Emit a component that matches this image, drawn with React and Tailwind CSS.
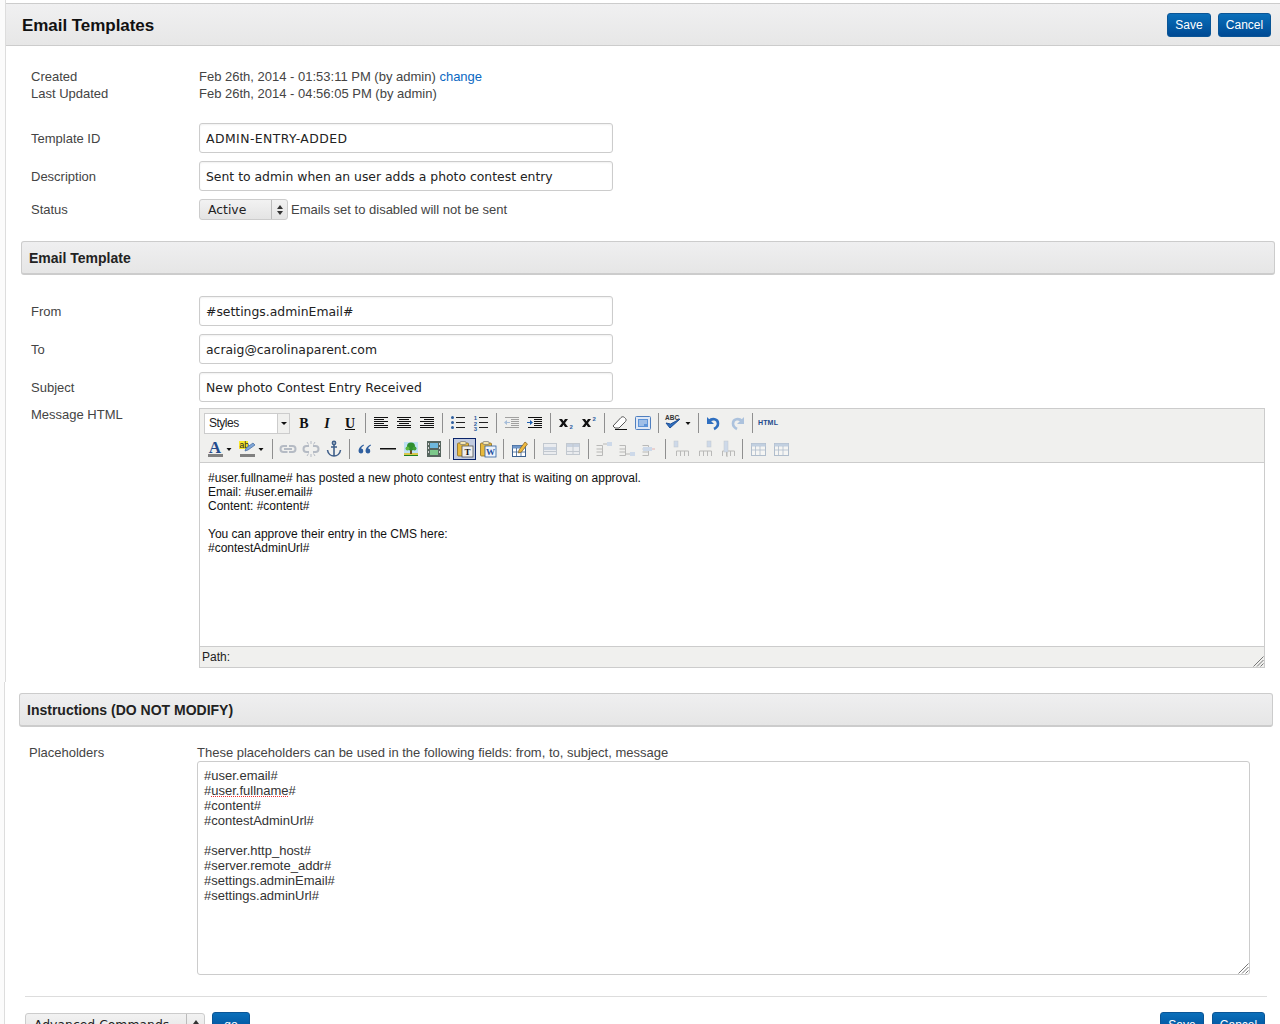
import React from "react";

const Ico = ({ children, dim }) => (
  <span className="w-[23px] h-5 flex items-center justify-center shrink-0">
    <svg width="20" height="20" viewBox="0 0 20 20" className={dim ? "opacity-35" : ""}>
      {children}
    </svg>
  </span>
);

const Sep = () => (
  <span className="w-2 h-5 flex justify-center shrink-0">
    <span className="w-px h-full bg-[#8f8f8f]" />
  </span>
);

const Arrow = () => (
  <svg width="12" height="20" viewBox="0 0 12 20" className="shrink-0">
    <path d="M3.500 9h5l-2.500 3z" fill="#111" />
  </svg>
);

// 6 horizontal lines, used by the align buttons
const Lines = ({ rows }) =>
  rows.map(([x, w], i) => <rect key={i} x={x} y={4 + i * 2} width={w} height="1" fill="#111" />);

const Letter = ({ c, italic, under }) => (
  <Ico>
    <text
      x="10"
      y="14.500"
      textAnchor="middle"
      fontFamily="Liberation Serif"
      fontWeight="700"
      fontStyle={italic ? "italic" : "normal"}
      fontSize="14"
      fill="#111"
    >
      {c}
    </text>
    {under && <rect x="5" y="16" width="10" height="1" fill="#111" />}
  </Ico>
);

const ListLines = () => (
  <g fill="#222">
    <rect x="8" y="4" width="9" height="1" />
    <rect x="8" y="9" width="9" height="1" />
    <rect x="8" y="14" width="9" height="1" />
  </g>
);

const Bullets = () => (
  <Ico>
    <ListLines />
    <g fill="#2f5f9f">
      <circle cx="4.500" cy="4.500" r="1.500" />
      <circle cx="4.500" cy="9.500" r="1.500" />
      <circle cx="4.500" cy="14.500" r="1.500" />
    </g>
  </Ico>
);

const Numbers = () => (
  <Ico>
    <ListLines />
    <g fill="#2f5f9f" fontSize="6" fontWeight="700" fontFamily="Liberation Sans" textAnchor="middle">
      <text x="4.500" y="7">1</text>
      <text x="4.500" y="12.500">2</text>
      <text x="4.500" y="18">3</text>
    </g>
  </Ico>
);

const IndentIcon = ({ dim }) => (
  <Ico dim={dim}>
    <g fill="#111">
      <rect x="3" y="4" width="14" height="1" />
      <rect x="9" y="6" width="8" height="1" />
      <rect x="9" y="8" width="8" height="1" />
      <rect x="9" y="10" width="8" height="1" />
      <rect x="9" y="12" width="8" height="1" />
      <rect x="3" y="14" width="14" height="1" />
    </g>
    <path d={dim ? "M2 9.500 5 7v2h3v1H5v2z" : "M8 9.500 5 7v2H2v1h3v2z"} fill="#1f5fb0" />
  </Ico>
);

const ScriptIcon = ({ sup }) => (
  <Ico>
    <path d="M3 6h3l1.500 2.300L9 6h3l-3 4 3 4H9l-1.500-2.300L6 14H3l3-4z" fill="#111" />
    <text x="13.500" y={sup ? 8 : 16} fontSize="6" fontWeight="700" fontFamily="Liberation Sans" fill="#2f5f9f">
      2
    </text>
  </Ico>
);

const Eraser = () => (
  <Ico>
    <path d="M3 13 11 4.500c1-1 2.500-1 3.500 0l1 1c.8.8.8 2 0 3L9 15H5z" fill="#fff" stroke="#555" />
    <rect x="5" y="16" width="12" height="1" fill="#111" />
  </Ico>
);

const Cleanup = () => (
  <Ico>
    <rect x="2.500" y="3.500" width="15" height="13" rx="1" fill="#dfe8f6" stroke="#4f7fbf" />
    <rect x="5" y="6" width="10" height="8" fill="#5c93d8" />
    <path d="M6 8h8M6 10h8M6 12h5" stroke="#dfe8f6" />
  </Ico>
);

const Spell = () => (
  <Ico>
    <text x="2" y="7" fontSize="6.500" fontWeight="700" fontFamily="Liberation Sans" fill="#333">
      ABC
    </text>
    <path d="m3 10 4 5 10-9-9.500 5z" fill="#2f6fc0" stroke="#1d4f96" strokeWidth="1" strokeLinejoin="round" />
  </Ico>
);

const Undo = ({ redo, dim }) => (
  <Ico dim={dim}>
    <g transform={redo ? "matrix(-1 0 0 1 20 0)" : undefined}>
      <path d="M5 8c3-3 9-2.500 9 2.500 0 2.500-2 4.500-4 5.500" fill="none" stroke="#2f6fc0" strokeWidth="2.600" />
      <path d="M3 4v7h7z" fill="#2f6fc0" />
    </g>
  </Ico>
);

const FontColor = () => (
  <Ico>
    <text x="10" y="13.500" textAnchor="middle" fontFamily="Liberation Serif" fontWeight="700" fontSize="17" fill="#234a8c">
      A
    </text>
    <rect x="3" y="15" width="15" height="3" fill="#808080" />
  </Ico>
);

const Highlight = () => (
  <Ico>
    <rect x="2" y="2" width="9" height="8" fill="#f7e92a" />
    <text x="2.500" y="9" fontSize="8.500" fontFamily="Liberation Sans" fill="#222">
      ab
    </text>
    <path d="m8 12 1-3 7-5 2 2-7 5z" fill="#7ea6d8" stroke="#44689c" strokeWidth=".7" />
    <rect x="3" y="15" width="15" height="3" fill="#808080" />
  </Ico>
);

const LinkIcon = ({ broken }) => (
  <Ico dim>
    <g fill="none" stroke="#4a5a78" strokeWidth="2">
      {broken ? (
        <>
          <path d="M8 7H5.500a3 3 0 0 0 0 6H8M12 7h2.500a3 3 0 0 1 0 6H12" />
          <path d="M10 2v3M6 3l1.500 2.500M14 3l-1.500 2.500M10 15v3M6 17l1.500-2.500M14 17l-1.500-2.500" strokeWidth="1" />
        </>
      ) : (
        <path d="M9 7H5.500a3 3 0 0 0 0 6h4M11 7h3.500a3 3 0 0 1 0 6H11M6 10h8" />
      )}
    </g>
  </Ico>
);

const Anchor = () => (
  <Ico>
    <g fill="none" stroke="#3f5f8a" strokeWidth="1.600">
      <circle cx="10" cy="4" r="1.600" />
      <path d="M10 5.500V17M7 8h6M3.500 11c.5 4 3.500 6 6.500 6s6-2 6.500-6" />
    </g>
  </Ico>
);

const Quote = () => (
  <Ico>
    <g fill="#2f5f9f">
      <path d="M8.500 5.500C5.500 7 3.500 9 3.500 12a2.400 2.400 0 1 0 2.700-2.400C6.300 8.500 7.300 7.300 9 6.500z" />
      <path d="M15.500 5.500C12.500 7 10.500 9 10.500 12a2.400 2.400 0 1 0 2.700-2.400c.1-1.100 1.100-2.300 2.800-3.100z" />
    </g>
  </Ico>
);

const Hr = () => (
  <Ico>
    <rect x="2" y="9" width="16" height="1.500" fill="#111" />
  </Ico>
);

const ImageIcon = () => (
  <Ico>
    <rect x="3" y="3" width="14" height="14" fill="#bfe0f5" />
    <rect x="3" y="14" width="14" height="3" fill="#d8c84a" />
    <rect x="9" y="10" width="2" height="5" fill="#6b4a1f" />
    <circle cx="10" cy="7.500" r="4" fill="#2f8f2f" />
    <circle cx="6.500" cy="9.500" r="2" fill="#5cb83f" />
    <circle cx="13.500" cy="9.500" r="2" fill="#3f9f3a" />
    <rect x="3" y="16" width="14" height="1" fill="#1f7f1f" />
  </Ico>
);

const Film = () => (
  <Ico>
    <rect x="3" y="2" width="14" height="16" fill="#56655e" />
    <rect x="6" y="4" width="8" height="5" fill="#6fb8dc" />
    <rect x="6" y="11" width="8" height="5" fill="#7cc88a" />
    <g fill="#d5d5d5">
      <rect x="4" y="4" width="1" height="2" />
      <rect x="4" y="8" width="1" height="2" />
      <rect x="4" y="12" width="1" height="2" />
      <rect x="15" y="4" width="1" height="2" />
      <rect x="15" y="8" width="1" height="2" />
      <rect x="15" y="12" width="1" height="2" />
    </g>
  </Ico>
);

const Clip = () => (
  <>
    <rect x="2.500" y="4" width="11" height="13" rx="1" fill="#e8b93c" stroke="#8a6a1f" strokeWidth=".8" />
    <rect x="5" y="2.500" width="6" height="3" rx="1" fill="#f5e6b0" stroke="#777" strokeWidth=".7" />
  </>
);

const PasteText = () => (
  <span className="w-[23px] h-[22px] flex items-center justify-center shrink-0 bg-[#c2cbe0] border border-[#0a246a]">
    <svg width="20" height="20" viewBox="0 0 20 20">
      <Clip />
      <rect x="7" y="7" width="11" height="11" fill="#eee" stroke="#555" strokeWidth=".8" />
      <text x="12.500" y="16" textAnchor="middle" fontSize="9" fontWeight="700" fontFamily="Liberation Serif" fill="#111">
        T
      </text>
    </svg>
  </span>
);

const PasteWord = () => (
  <Ico>
    <Clip />
    <rect x="7" y="7" width="11" height="11" fill="#eef3fb" stroke="#2f5f9f" strokeWidth=".8" />
    <text x="12.500" y="16" textAnchor="middle" fontSize="9" fontWeight="700" fontFamily="Liberation Serif" fill="#1f4f9f">
      W
    </text>
  </Ico>
);

const Grid = ({ x = 3, y = 6, w = 13, h = 11 }) => (
  <>
    <rect x={x + 0.5} y={y + 0.5} width={w} height={h} fill="#fff" stroke="#3a5f8f" />
    <rect x={x + 0.5} y={y + 0.5} width={w} height="3" fill="#6f96c8" />
    <path d={`M${x + 4.500} ${y + 3}v${h - 3}M${x + 9} ${y + 3}v${h - 3}M${x} ${y + 7}h${w}`} stroke="#3a5f8f" strokeWidth=".8" />
  </>
);

const TableEdit = () => (
  <Ico>
    <Grid />
    <path d="m10 11 6-8 2.500 2-6 8-3 1z" fill="#efb93f" stroke="#7a5a1f" strokeWidth=".7" />
  </Ico>
);

const RowIcon = ({ flip }) => (
  <Ico dim>
    <rect x="3.500" y="4.500" width="13" height="11" fill="#dfe6f2" stroke="#6f7f96" />
    <rect x="4" y={flip ? 5 : 8} width="12" height="3" fill="#7f9cc8" />
    <path d="M3 12.500h14" stroke="#6f7f96" />
    {flip && <path d="M10 5v10" stroke="#6f7f96" />}
  </Ico>
);

const RowOp = ({ kind }) => (
  <Ico dim>
    <g fill="none" stroke="#555">
      <path d="M2.500 6.500h6v10h-6M2.500 10h6M2.500 13h6" />
      {kind === 0 && <path d="M9 5h4" />}
      {kind === 1 && <path d="M9 15h4" />}
      {kind === 2 && <path d="M9 10h6" stroke="#d04040" />}
    </g>
    <rect x={kind === 2 ? 3 : 13} y={kind === 1 ? 13 : kind === 2 ? 8 : 3} width={kind === 2 ? 9 : 5} height="4" fill="#8fb0e0" />
  </Ico>
);

const ColOp = ({ kind }) => (
  <Ico dim>
    <g fill="none" stroke="#555">
      <path d="M5.500 17v-5h12v5M9.500 12v5M13.500 12v5" />
    </g>
    <rect x={kind === 0 ? 3 : kind === 1 ? 13 : 7} y="2" width="4" height={kind === 2 ? 11 : 6} fill="#8fb0e0" stroke="#6f7f96" strokeWidth=".5" />
    {kind === 2 && <path d="M10 13v5" stroke="#555" />}
  </Ico>
);

const GridIcon = () => (
  <Ico dim>
    <Grid x={3} y={4} w={14} h={12} />
  </Ico>
);

const Toolbar = () => (
  <div className="bg-[#f0f0ee] h-[54px] border-b border-[#ccc] px-1 pt-1 flex flex-col gap-[6px]">
    <div className="flex items-center h-5">
      <div className="flex w-[86px] h-[21px] mr-[2.500px] border border-[#ccc] bg-white text-xs items-center text-[#222] shrink-0">
        <span className="flex-1 pl-1 tracking-[-0.5px]">Styles</span>
        <span className="w-3 h-full border-l border-[#ccc] bg-[#f0f0ee] flex items-center justify-center">
          <span className="border-x-[3px] border-x-transparent border-t-[3px] border-t-[#111]" />
        </span>
      </div>
      <Letter c="B" />
      <Letter c="I" italic />
      <Letter c="U" under />
      <Sep />
      <Ico><Lines rows={[[3, 14], [3, 10], [3, 14], [3, 10], [3, 14], [3, 14]]} /></Ico>
      <Ico><Lines rows={[[3, 14], [5, 10], [3, 14], [5, 10], [3, 14], [3, 14]]} /></Ico>
      <Ico><Lines rows={[[3, 14], [7, 10], [3, 14], [7, 10], [3, 14], [3, 14]]} /></Ico>
      <Sep />
      <Bullets />
      <Numbers />
      <Sep />
      <IndentIcon dim />
      <IndentIcon />
      <Sep />
      <ScriptIcon />
      <ScriptIcon sup />
      <Sep />
      <Eraser />
      <Cleanup />
      <Sep />
      <span className="w-8 flex shrink-0">
        <span className="-ml-px"><Spell /></span>
        <span className="-ml-[3px]"><Arrow /></span>
      </span>
      <Sep />
      <Undo />
      <Undo redo dim />
      <Sep />
      <span className="w-[23px] text-center text-[7px] font-bold text-[#234a8c] tracking-[0.2px] shrink-0">HTML</span>
    </div>
    <div className="flex items-center h-5">
      <span className="w-8 flex shrink-0">
        <span className="-ml-px"><FontColor /></span>
        <span className="-ml-[3px]"><Arrow /></span>
      </span>
      <span className="w-8 flex shrink-0">
        <span className="-ml-px"><Highlight /></span>
        <span className="-ml-[3px]"><Arrow /></span>
      </span>
      <Sep />
      <LinkIcon />
      <LinkIcon broken />
      <Anchor />
      <Sep />
      <Quote />
      <Hr />
      <ImageIcon />
      <Film />
      <Sep />
      <PasteText />
      <PasteWord />
      <Sep />
      <TableEdit />
      <Sep />
      <RowIcon />
      <RowIcon flip />
      <Sep />
      <RowOp kind={0} />
      <RowOp kind={1} />
      <RowOp kind={2} />
      <Sep />
      <ColOp kind={0} />
      <ColOp kind={1} />
      <ColOp kind={2} />
      <Sep />
      <GridIcon />
      <GridIcon />
    </div>
  </div>
);

const Btn = ({ children, className = "" }) => (
  <button className={`h-6 pt-px rounded-[3px] border border-[#0a5596] bg-gradient-to-b from-[#0b6fba] to-[#004a94] text-white text-xs leading-[20px] text-center shrink-0 ${className}`}>
    {children}
  </button>
);

const Bar = ({ children, className = "" }) => (
  <div className={`h-[34px] flex items-center pl-[7px] pt-[2px] rounded-[3px] border border-[#ccc] border-b-2 bg-gradient-to-b from-[#efeff0] to-[#e6e6e6] text-[14px] font-bold text-[#222] ${className}`}>
    {children}
  </div>
);

const Field = ({ label, value, className = "", inputClass = "", labelClass = "" }) => (
  <div className={`flex items-center h-[30px] ${className}`}>
    <label className={`w-[168px] shrink-0 ${labelClass}`}>{label}</label>
    <input
      readOnly
      value={value}
      className={`w-[414px] h-[30px] px-[6px] rounded-[3px] border border-[#ccc] bg-white text-[12.4px] text-[#222] font-['DejaVu_Sans'] shadow-[inset_0_1px_2px_rgba(0,0,0,0.06)] outline-none ${inputClass}`}
    />
  </div>
);

const Grip = () => (
  <svg width="12" height="12" viewBox="0 0 12 12" className="absolute right-0 bottom-0">
    <path d="M11.500 1.500 1.500 11.500M11.500 5 5 11.500M11.500 8.500 8.500 11.500" stroke="#777" />
  </svg>
);

const App = () => (
  <div className="w-[1280px] h-[1024px] overflow-hidden bg-[#fbfbfb] font-['Liberation_Sans',sans-serif] text-[13px] text-[#444]">
    <div className="ml-[5px] h-[682px] pt-[3px] border-l border-[#ddd] bg-white">
      <div className="h-[43px] flex items-center justify-between pl-4 pr-[9px] border-y border-[#ccc] bg-gradient-to-b from-[#f0f0f1] to-[#e7e7e7]">
        <h1 className="text-[17px] pt-[3px] font-bold text-[#111] tracking-[-0.05px]">Email Templates</h1>
        <div className="flex gap-[7px]">
          <Btn className="w-[44px]">Save</Btn>
          <Btn className="w-[53px]">Cancel</Btn>
        </div>
      </div>

      <div className="pl-[25px] pt-[22px] leading-[17px]">
        <div className="flex">
          <span className="w-[168px]">Created</span>
          <span>
            Feb 26th, 2014 - 01:53:11 PM (by admin) <a className="text-[#0a68c2]">change</a>
          </span>
        </div>
        <div className="flex">
          <span className="w-[168px]">Last Updated</span>
          <span>Feb 26th, 2014 - 04:56:05 PM (by admin)</span>
        </div>
        <Field label="Template ID" value="ADMIN-ENTRY-ADDED" className="mt-[21px]" inputClass="tracking-[0.45px]" />
        <Field label="Description" value="Sent to admin when an user adds a photo contest entry" className="mt-2" />
        <div className="flex items-center h-[21px] mt-2">
          <span className="w-[168px]">Status</span>
          <div className="w-[89px] h-[21px] rounded-[3px] border border-[#ccc] bg-gradient-to-b from-[#f2f2f2] to-[#e4e4e4] flex items-center text-[12.4px] text-[#222] font-['DejaVu_Sans'] shrink-0">
            <span className="flex-1 pl-2">Active</span>
            <span className="w-4 h-full border-l border-[#bbb] flex flex-col items-center justify-center gap-[2px]">
              <span className="border-x-[3px] border-x-transparent border-b-[4px] border-b-[#333]" />
              <span className="border-x-[3px] border-x-transparent border-t-[4px] border-t-[#333]" />
            </span>
          </div>
          <span className="ml-[3px]">Emails set to disabled will not be sent</span>
        </div>
      </div>

      <Bar className="ml-[15px] w-[1254px] mt-[21px]">Email Template</Bar>

      <div className="pl-[25px] pt-[21px]">
        <Field label="From" value="#settings.adminEmail#" labelClass="pt-[2px]" />
        <Field label="To" value="acraig@carolinaparent.com" className="mt-2" labelClass="pt-[2px]" />
        <Field label="Subject" value="New photo Contest Entry Received" className="mt-2" labelClass="pt-[2px]" />
        <div className="flex mt-[6px]">
          <label className="w-[168px] shrink-0 leading-[14px]">Message HTML</label>
          <div className="w-[1066px] h-[260px] border border-[#ccc] flex flex-col relative">
            <Toolbar />
            <div className="flex-1 bg-white px-2 pt-2 text-xs leading-[14px] text-[#111]">
              <p>#user.fullname# has posted a new photo contest entry that is waiting on approval.</p>
              <p>Email: #user.email#</p>
              <p>Content: #content#</p>
              <p>&nbsp;</p>
              <p>You can approve their entry in the CMS here:</p>
              <p>#contestAdminUrl#</p>
            </div>
            <div className="h-[21px] border-t border-[#ccc] bg-[#f0f0ee] pl-[2px] text-xs leading-[20px] text-[#222]">Path:</div>
            <Grip />
          </div>
        </div>
      </div>
    </div>

    <div className="ml-1 h-[342px] pt-[11px] border-l border-[#ddd] bg-white">
      <Bar className="ml-[14px] w-[1254px]">Instructions (DO NOT MODIFY)</Bar>
      <div className="pl-6 pt-[17px]">
        <div className="flex h-4 leading-[18px]">
          <span className="w-[168px]">Placeholders</span>
          <span>These placeholders can be used in the following fields: from, to, subject, message</span>
        </div>
        <div className="ml-[168px] w-[1053px] h-[214px] mt-[1px] relative rounded-[3px] border border-[#ccc] pl-[6px] pt-[6px] leading-[15px] text-[#333]">
          <p>#user.email#</p>
          <p>
            #<span className="underline decoration-dotted decoration-[#e33] decoration-1 underline-offset-1">user.fullname</span>#
          </p>
          <p>#content#</p>
          <p>#contestAdminUrl#</p>
          <p>&nbsp;</p>
          <p>#server.http_host#</p>
          <p>#server.remote_addr#</p>
          <p>#settings.adminEmail#</p>
          <p>#settings.adminUrl#</p>
          <Grip />
        </div>
      </div>
      <hr className="ml-5 w-[1242px] mt-[21px] border-[#ddd]" />
      <div className="ml-5 w-[1240px] mt-[15px] flex items-start">
        <div className="w-[180px] h-6 mt-px rounded-[3px] border border-[#ccc] bg-gradient-to-b from-[#f2f2f2] to-[#e4e4e4] flex items-center text-[12.4px] text-[#222] font-['DejaVu_Sans'] shrink-0">
          <span className="flex-1 pl-2">Advanced Commands</span>
          <span className="w-[18px] h-full border-l border-[#bbb] flex flex-col items-center justify-center gap-[2px]">
            <span className="border-x-[3px] border-x-transparent border-b-[4px] border-b-[#333]" />
            <span className="border-x-[3px] border-x-transparent border-t-[4px] border-t-[#333]" />
          </span>
        </div>
        <Btn className="w-[38px] ml-[7px]">go</Btn>
        <div className="ml-auto flex gap-2">
          <Btn className="w-[44px]">Save</Btn>
          <Btn className="w-[53px]">Cancel</Btn>
        </div>
      </div>
    </div>
  </div>
);

export default App;
